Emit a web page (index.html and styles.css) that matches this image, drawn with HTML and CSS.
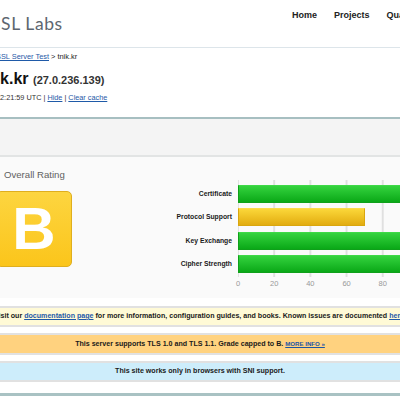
FILE: index.html
```html
<!DOCTYPE html>
<html>
<head>
<meta charset="utf-8">
<title>SSL Server Test: tnik.kr</title>
<link rel="stylesheet" href="styles.css">
</head>
<body>
<header class="topbar">
  <div class="logo">SSL Labs</div>
  <nav class="nav">
    <a href="#">Home</a>
    <a href="#">Projects</a>
    <a href="#">Qualys Free Trial</a>
    <a href="#">Contact</a>
  </nav>
</header>

<section class="report-head">
  <div class="crumbs"><a href="#">SSL Server Test</a> &gt; tnik.kr</div>
  <h1 class="title">tnik.kr <span class="ip">(27.0.236.139)</span></h1>
  <div class="assessed">12:21:59 UTC | <a href="#">Hide</a> | <a href="#">Clear cache</a></div>
</section>

<div class="band"></div>

<section class="summary">
  <div class="rating">
    <div class="rating-title">Overall Rating</div>
    <div class="grade">B</div>
  </div>
  <div class="chart">
    <div class="chart-body">
      <div class="labels">
        <span>Certificate</span>
        <span>Protocol Support</span>
        <span>Key Exchange</span>
        <span>Cipher Strength</span>
      </div>
      <div class="plot">
        <div class="bar green" style="width:100%"></div>
        <div class="bar yellow" style="width:70%"></div>
        <div class="bar green" style="width:100%"></div>
        <div class="bar green" style="width:100%"></div>
      </div>
    </div>
    <div class="axis">
      <span>0</span><span>20</span><span>40</span><span>60</span><span>80</span><span>100</span>
    </div>
  </div>
</section>

<section class="notices">
  <div class="notice note-yellow">Visit our <a href="#">documentation page</a> for more information, configuration guides, and books. Known issues are documented <a href="#">here</a>.</div>
  <div class="notice note-orange">This server supports TLS 1.0 and TLS 1.1. Grade capped to B. <a href="#" class="more">MORE INFO &raquo;</a></div>
  <div class="notice note-blue">This site works only in browsers with SNI support.</div>
</section>

<div class="footer-line"></div>
</body>
</html>
```

FILE: styles.css
```css
html, body {
  margin: 0;
  padding: 0;
  overflow: hidden;
  background: #ffffff;
}

body {
  width: 400px;
  font-family: "Liberation Sans", Arial, sans-serif;
  color: #222;
}

a {
  color: #1f5aa8;
  text-decoration: underline;
}

/* Header */
.topbar {
  display: flex;
  height: 47px;
  border-bottom: 1px solid #dde5ea;
}

.logo {
  flex: none;
  width: 301px;
  margin-left: -9px;
  padding-top: 12px;
  line-height: 24px;
  font-family: Lato, "Open Sans", sans-serif;
  font-size: 17.5px;
  letter-spacing: 0.6px;
  color: #5d6670;
  white-space: nowrap;
}

.nav {
  display: flex;
  gap: 17px;
  padding-top: 10px;
  font-size: 9px;
  line-height: 11px;
  font-weight: bold;
  white-space: nowrap;
}

.nav a {
  color: #222;
  text-decoration: none;
}

/* Report head */
.crumbs {
  margin: 4px 0 0 -4px;
  font-size: 7.4px;
  line-height: 10px;
  color: #222;
  white-space: nowrap;
}

.title {
  margin: 7px 0 0 -19.5px;
  font-size: 16px;
  line-height: 20px;
  font-weight: bold;
  color: #111;
  white-space: nowrap;
}

.ip {
  font-size: 11px;
  color: #333;
}

.assessed {
  margin: 3px 0 0 -4px;
  font-size: 7.3px;
  line-height: 10px;
  color: #333;
  white-space: nowrap;
}

.band {
  margin-top: 14px;
  height: 36px;
  background: #f4f4f4;
  border-top: 2px solid #a7bfc1;
  border-bottom: 2px solid #e2e4e4;
}

/* Summary */
.summary {
  display: flex;
  align-items: flex-start;
  background: #fafafa;
  padding-bottom: 9px;
}

.rating {
  flex: none;
  width: 76px;
  margin-left: -4px;
}

.rating-title {
  margin-top: 12px;
  padding-left: 8px;
  font-size: 9.6px;
  line-height: 12px;
  color: #5f5f5f;
  white-space: nowrap;
}

.grade {
  margin-top: 10px;
  height: 76px;
  box-sizing: border-box;
  border: 1px solid #dfae1e;
  border-radius: 5px;
  background: linear-gradient(#fdd540, #fbc51b);
  color: #fff;
  font-size: 60px;
  font-weight: bold;
  line-height: 74px;
  text-align: center;
}

.chart {
  flex: none;
  margin-top: 23px;
}

.chart-body {
  display: flex;
  gap: 6px;
}

.labels {
  flex: none;
  width: 160px;
  display: flex;
  flex-direction: column;
  gap: 5.3px;
  padding: 5px 0 4px;
  text-align: right;
  font-size: 6.8px;
  font-weight: bold;
  color: #1a1a1a;
}

.labels span {
  line-height: 18px;
  height: 18px;
  white-space: nowrap;
}

.plot {
  flex: none;
  width: 181px;
  display: flex;
  flex-direction: column;
  gap: 5.3px;
  padding: 5px 0 4px;
  background-image: linear-gradient(to right, #e0e0e0 2px, transparent 2px);
  background-size: 36.2px 100%;
  background-position: -1px 0;
}

.bar {
  height: 18px;
  box-sizing: border-box;
}

.bar.green {
  background: linear-gradient(#34d33e, #0aa817);
  border: 1px solid #0fa01a;
  border-top-color: #3ed947;
}

.bar.yellow {
  background: linear-gradient(#fbd739, #e2ac10);
  border: 1px solid #d9a60e;
  border-top-color: #fbdb4a;
}

.axis {
  margin: 2px 0 0 166px;
  width: 181px;
  display: flex;
  justify-content: space-between;
  font-size: 7.5px;
  line-height: 10px;
  color: #999;
}

.axis span {
  width: 0;
  display: flex;
  justify-content: center;
}

/* Notices */
.notices {
  margin: 0 -30px;
  padding-top: 8px;
  display: flex;
  flex-direction: column;
  gap: 6px;
}

.notice {
  border-top: 2px solid #e1e1e1;
  border-bottom: 2px solid #e1e1e1;
  line-height: 17px;
  text-align: center;
  font-size: 7.1px;
  font-weight: bold;
  color: #1a1a1a;
  white-space: nowrap;
}

.note-yellow {
  background: #fffad6;
}

.note-orange {
  background: #ffd27f;
}

.note-blue {
  background: #cdedfb;
}

.more {
  font-size: 6.1px;
  color: #1c55a5;
}

.footer-line {
  margin-top: 11px;
  height: 20px;
  border-top: 3px solid #a9c2c3;
}
```
